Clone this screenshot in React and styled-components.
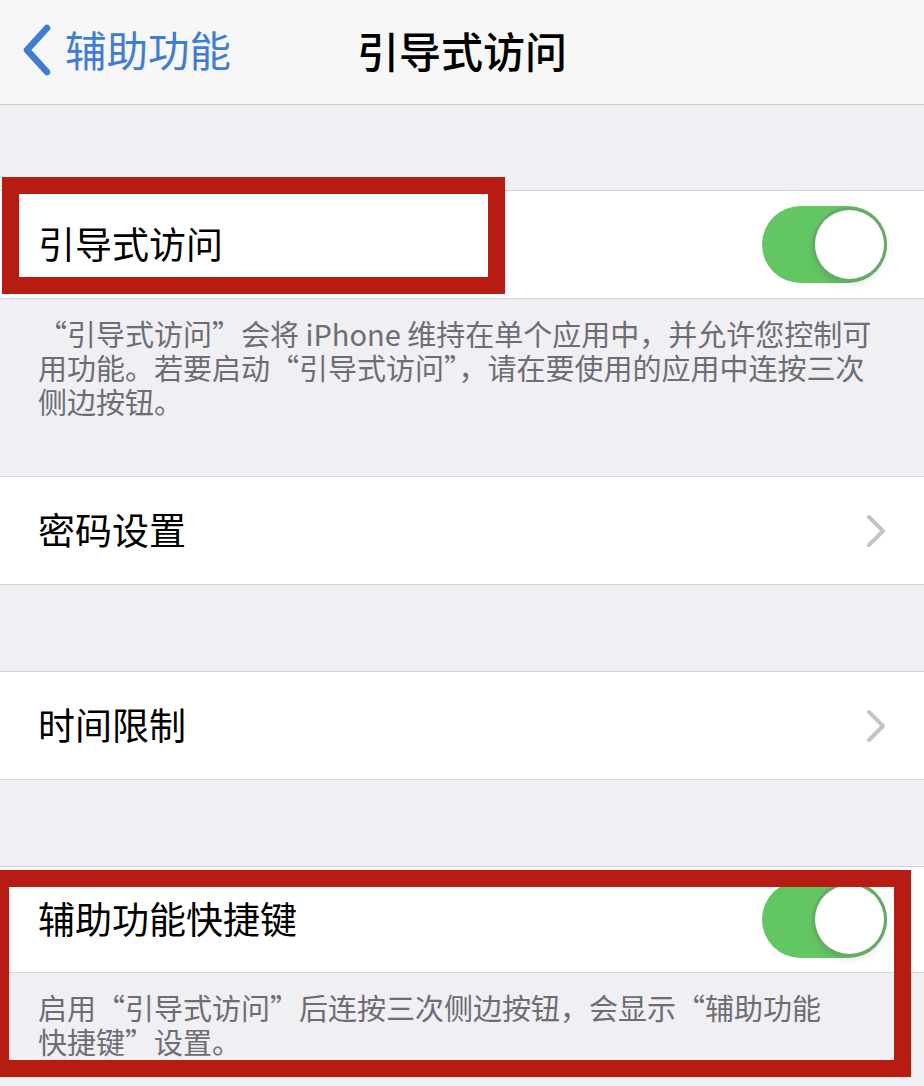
import React from "react";
import styled, { createGlobalStyle } from "styled-components";

const GlobalStyle = createGlobalStyle`
  html, body {
    margin: 0;
    padding: 0;
    background: #efeff4;
  }
  body {
    font-family: "Noto Sans CJK SC", "Noto Sans", sans-serif;
    -webkit-font-smoothing: antialiased;
  }
`;

const Page = styled.div`
  position: relative;
  width: 924px;
  height: 1086px;
  overflow: hidden;
  display: flex;
  flex-direction: column;
  background: #efeff4;
`;

const NavBar = styled.header`
  height: 104px;
  flex-shrink: 0;
  display: grid;
  grid-template-columns: 1fr auto 1fr;
  align-items: center;
  background: #f7f7f8;
  border-bottom: 1px solid #cfcfd3;
`;

const BackButton = styled.div`
  display: flex;
  align-items: center;
  gap: 13px;
  padding-left: 22px;
  color: #3f7dd3;
  font-size: 41.5px;
  line-height: 1;
  padding-bottom: 4px;
`;

const Title = styled.h1`
  margin: 0;
  font-size: 42px;
  font-weight: 500;
  color: #000;
  line-height: 1;
  padding-bottom: 4px;
`;

const Spacer = styled.div`
  height: ${(p) => p.$h}px;
  flex-shrink: 0;
`;

const Group = styled.section`
  background: #fff;
  border-top: 1px solid #d6d6da;
  border-bottom: 1px solid #d6d6da;
  flex-shrink: 0;
`;

const Row = styled.div`
  height: ${(p) => p.$h || 106}px;
  display: flex;
  align-items: center;
  justify-content: space-between;
  padding: 0 38px 0 38px;
`;

const Label = styled.span`
  font-size: 37px;
  color: #000;
  line-height: 1;
  padding-bottom: 2px;
`;

const Footer = styled.div`
  height: ${(p) => p.$h}px;
  box-sizing: border-box;
  padding: 17px 38px 0;
  font-size: 29px;
  color: #6d6d72;
  flex-shrink: 0;
`;

const FooterLine = styled.div`
  height: 34px;
  line-height: 34px;
  white-space: nowrap;
`;

const Track = styled.div`
  width: 125px;
  height: 77px;
  border-radius: 39px;
  background: #62c663;
  margin-right: -1px;
  display: flex;
  align-items: center;
  justify-content: flex-end;
  padding-right: 3px;
  box-sizing: border-box;
`;

const Knob = styled.div`
  width: 69px;
  height: 69px;
  border-radius: 50%;
  background: #fff;
  box-shadow: 0 0 0 3px #6aa86a, 0 5px 8px rgba(0, 0, 0, 0.12);
`;

// red annotation frames drawn over the list
const Highlight = styled.div`
  position: absolute;
  top: ${(p) => p.$top}px;
  left: ${(p) => p.$left}px;
  width: ${(p) => p.$w}px;
  height: ${(p) => p.$h}px;
  border: 17px solid #b71c13;
  box-sizing: border-box;
  pointer-events: none;
`;

const BackChevron = () => (
  <svg width="30" height="52" viewBox="0 0 30 52">
    <polyline
      points="25,4 5,26 25,48"
      fill="none"
      stroke="#3f7dd3"
      strokeWidth="6.5"
      strokeLinecap="round"
      strokeLinejoin="round"
    />
  </svg>
);

const Chevron = () => (
  <svg width="20" height="32" viewBox="0 0 20 32">
    <polyline
      points="3,2 17,16 3,30"
      fill="none"
      stroke="#c4c4c8"
      strokeWidth="4"
      strokeLinecap="round"
      strokeLinejoin="round"
    />
  </svg>
);

const Switch = () => (
  <Track>
    <Knob />
  </Track>
);

const guidedNote = [
  "“引导式访问”会将 iPhone 维持在单个应用中，并允许您控制可",
  "用功能。若要启动“引导式访问”，请在要使用的应用中连按三次",
  "侧边按钮。",
];

const shortcutNote = [
  "启用“引导式访问”后连按三次侧边按钮，会显示“辅助功能",
  "快捷键”设置。",
];

export default function App() {
  return (
    <>
      <GlobalStyle />
      <Page>
        <NavBar>
          <BackButton>
            <BackChevron />
            辅助功能
          </BackButton>
          <Title>引导式访问</Title>
          <div />
        </NavBar>

        <Spacer $h={85} />
        <Group>
          <Row $h={107}>
            <Label>引导式访问</Label>
            <Switch />
          </Row>
        </Group>
        <Footer $h={177}>
          {guidedNote.map((line) => (
            <FooterLine key={line}>{line}</FooterLine>
          ))}
        </Footer>

        <Group>
          <Row $h={107}>
            <Label>密码设置</Label>
            <Chevron />
          </Row>
        </Group>
        <Spacer $h={86} />
        <Group>
          <Row $h={107}>
            <Label>时间限制</Label>
            <Chevron />
          </Row>
        </Group>
        <Spacer $h={86} />
        <Group>
          <Row $h={105}>
            <Label>辅助功能快捷键</Label>
            <Switch />
          </Row>
        </Group>
        <Footer $h={120}>
          {shortcutNote.map((line) => (
            <FooterLine key={line}>{line}</FooterLine>
          ))}
        </Footer>

        <Highlight $top={177} $left={2} $w={503} $h={117} />
        <Highlight $top={870} $left={-8} $w={919} $h={207} />
      </Page>
    </>
  );
}
